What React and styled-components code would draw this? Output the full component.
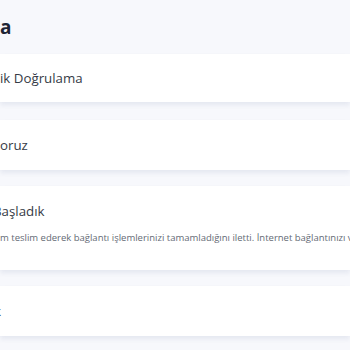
import React from "react";
import styled, { createGlobalStyle } from "styled-components";

const Global = createGlobalStyle`
  html, body { margin: 0; padding: 0; background: #f7f8fc; overflow: hidden; }
  body { font-family: "Open Sans", "Noto Sans", sans-serif; }
`;

const Page = styled.div`
  width: 350px;
  height: 350px;
  overflow: hidden;
  background: #f7f8fc;
  display: flex;
  flex-direction: column;
`;

const Header = styled.h1`
  margin: 0;
  height: 54px;
  display: flex;
  align-items: center;
  font-size: 19px;
  font-weight: 700;
  color: #1d2535;
  white-space: nowrap;
`;

const Card = styled.div`
  background: #ffffff;
  height: ${(p) => p.h}px;
  margin-top: ${(p) => p.mt || 0}px;
  box-shadow: 0 3px 5px rgba(40, 70, 120, 0.09);
  display: flex;
  flex-direction: column;
  justify-content: ${(p) => (p.top ? "flex-start" : "center")};
  padding-top: ${(p) => (p.top ? 16 : 0)}px;
  box-sizing: border-box;
  overflow: hidden;
  white-space: nowrap;
`;

const Title = styled.div`
  font-size: 13.3px;
  line-height: 18px;
  color: #363b46;
  margin-left: ${(p) => p.shift || 0}px;
`;

const Text = styled.div`
  font-size: 9.5px;
  line-height: 14px;
  color: #646a75;
  margin-top: 11px;
  margin-left: ${(p) => p.shift || 0}px;
`;

export default function App() {
  return (
    <Page>
      <Global />
      <Header>a</Header>
      <Card h={48}>
        <Title>ik Doğrulama</Title>
      </Card>
      <Card h={50} mt={18}>
        <Title>oruz</Title>
      </Card>
      <Card h={84} mt={16} top>
        <Title shift={-7}>Başladık</Title>
        <Text>m teslim ederek bağlantı işlemlerinizi tamamladığını iletti. İnternet bağlantınızı ve cihazınızı kontrol edebilirsiniz.</Text>
      </Card>
      <Card h={50} mt={16}>
        <Title shift={-6}>k</Title>
      </Card>
    </Page>
  );
}
